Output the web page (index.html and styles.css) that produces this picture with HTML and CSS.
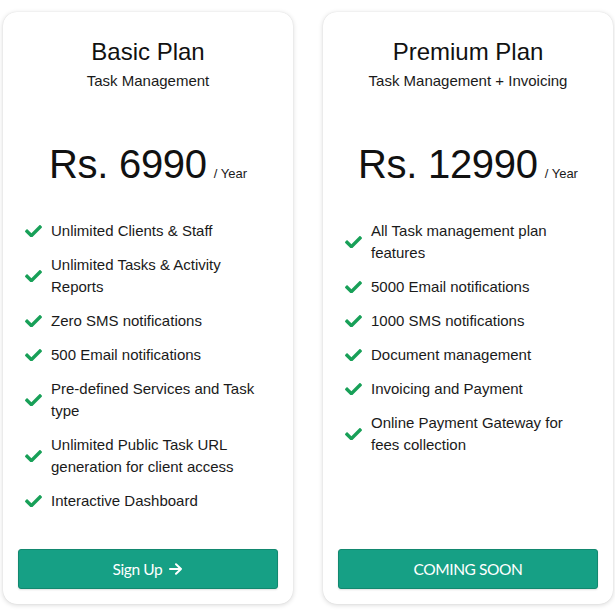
FILE: index.html
```html
<!DOCTYPE html>
<html lang="en">
<head>
<meta charset="utf-8">
<title>Plans</title>
<link rel="stylesheet" href="styles.css">
</head>
<body>
<div class="plans">
  <div class="card">
    <h2 class="plan-name">Basic Plan</h2>
    <p class="plan-sub">Task Management</p>
    <div class="price"><span class="amount">Rs. 6990</span><span class="per">/ Year</span></div>
    <ul class="features">
      <li><svg class="check" viewBox="0 64 512 384"><path d="M173.898 439.404l-166.4-166.4c-9.997-9.997-9.997-26.206 0-36.204l36.203-36.204c9.997-9.998 26.207-9.998 36.204 0L192 312.69 432.095 72.596c9.997-9.997 26.207-9.997 36.204 0l36.203 36.204c9.997 9.997 9.997 26.206 0 36.204l-294.4 294.401c-9.998 9.997-26.207 9.997-36.204-.001z"/></svg><span>Unlimited Clients &amp; Staff</span></li>
      <li><svg class="check" viewBox="0 64 512 384"><path d="M173.898 439.404l-166.4-166.4c-9.997-9.997-9.997-26.206 0-36.204l36.203-36.204c9.997-9.998 26.207-9.998 36.204 0L192 312.69 432.095 72.596c9.997-9.997 26.207-9.997 36.204 0l36.203 36.204c9.997 9.997 9.997 26.206 0 36.204l-294.4 294.401c-9.998 9.997-26.207 9.997-36.204-.001z"/></svg><span>Unlimited Tasks &amp; Activity Reports</span></li>
      <li><svg class="check" viewBox="0 64 512 384"><path d="M173.898 439.404l-166.4-166.4c-9.997-9.997-9.997-26.206 0-36.204l36.203-36.204c9.997-9.998 26.207-9.998 36.204 0L192 312.69 432.095 72.596c9.997-9.997 26.207-9.997 36.204 0l36.203 36.204c9.997 9.997 9.997 26.206 0 36.204l-294.4 294.401c-9.998 9.997-26.207 9.997-36.204-.001z"/></svg><span>Zero SMS notifications</span></li>
      <li><svg class="check" viewBox="0 64 512 384"><path d="M173.898 439.404l-166.4-166.4c-9.997-9.997-9.997-26.206 0-36.204l36.203-36.204c9.997-9.998 26.207-9.998 36.204 0L192 312.69 432.095 72.596c9.997-9.997 26.207-9.997 36.204 0l36.203 36.204c9.997 9.997 9.997 26.206 0 36.204l-294.4 294.401c-9.998 9.997-26.207 9.997-36.204-.001z"/></svg><span>500 Email notifications</span></li>
      <li><svg class="check" viewBox="0 64 512 384"><path d="M173.898 439.404l-166.4-166.4c-9.997-9.997-9.997-26.206 0-36.204l36.203-36.204c9.997-9.998 26.207-9.998 36.204 0L192 312.69 432.095 72.596c9.997-9.997 26.207-9.997 36.204 0l36.203 36.204c9.997 9.997 9.997 26.206 0 36.204l-294.4 294.401c-9.998 9.997-26.207 9.997-36.204-.001z"/></svg><span>Pre-defined Services and Task type</span></li>
      <li><svg class="check" viewBox="0 64 512 384"><path d="M173.898 439.404l-166.4-166.4c-9.997-9.997-9.997-26.206 0-36.204l36.203-36.204c9.997-9.998 26.207-9.998 36.204 0L192 312.69 432.095 72.596c9.997-9.997 26.207-9.997 36.204 0l36.203 36.204c9.997 9.997 9.997 26.206 0 36.204l-294.4 294.401c-9.998 9.997-26.207 9.997-36.204-.001z"/></svg><span>Unlimited Public Task URL generation for client access</span></li>
      <li><svg class="check" viewBox="0 64 512 384"><path d="M173.898 439.404l-166.4-166.4c-9.997-9.997-9.997-26.206 0-36.204l36.203-36.204c9.997-9.998 26.207-9.998 36.204 0L192 312.69 432.095 72.596c9.997-9.997 26.207-9.997 36.204 0l36.203 36.204c9.997 9.997 9.997 26.206 0 36.204l-294.4 294.401c-9.998 9.997-26.207 9.997-36.204-.001z"/></svg><span>Interactive Dashboard</span></li>
    </ul>
    <button class="btn">Sign Up <svg class="arrow" viewBox="0 0 14 12"><path d="M1 6h11M7 1.2L12 6l-5 4.8"/></svg></button>
  </div>
  <div class="card">
    <h2 class="plan-name">Premium Plan</h2>
    <p class="plan-sub">Task Management + Invoicing</p>
    <div class="price"><span class="amount">Rs. 12990</span><span class="per">/ Year</span></div>
    <ul class="features">
      <li><svg class="check" viewBox="0 64 512 384"><path d="M173.898 439.404l-166.4-166.4c-9.997-9.997-9.997-26.206 0-36.204l36.203-36.204c9.997-9.998 26.207-9.998 36.204 0L192 312.69 432.095 72.596c9.997-9.997 26.207-9.997 36.204 0l36.203 36.204c9.997 9.997 9.997 26.206 0 36.204l-294.4 294.401c-9.998 9.997-26.207 9.997-36.204-.001z"/></svg><span>All Task management plan features</span></li>
      <li><svg class="check" viewBox="0 64 512 384"><path d="M173.898 439.404l-166.4-166.4c-9.997-9.997-9.997-26.206 0-36.204l36.203-36.204c9.997-9.998 26.207-9.998 36.204 0L192 312.69 432.095 72.596c9.997-9.997 26.207-9.997 36.204 0l36.203 36.204c9.997 9.997 9.997 26.206 0 36.204l-294.4 294.401c-9.998 9.997-26.207 9.997-36.204-.001z"/></svg><span>5000 Email notifications</span></li>
      <li><svg class="check" viewBox="0 64 512 384"><path d="M173.898 439.404l-166.4-166.4c-9.997-9.997-9.997-26.206 0-36.204l36.203-36.204c9.997-9.998 26.207-9.998 36.204 0L192 312.69 432.095 72.596c9.997-9.997 26.207-9.997 36.204 0l36.203 36.204c9.997 9.997 9.997 26.206 0 36.204l-294.4 294.401c-9.998 9.997-26.207 9.997-36.204-.001z"/></svg><span>1000 SMS notifications</span></li>
      <li><svg class="check" viewBox="0 64 512 384"><path d="M173.898 439.404l-166.4-166.4c-9.997-9.997-9.997-26.206 0-36.204l36.203-36.204c9.997-9.998 26.207-9.998 36.204 0L192 312.69 432.095 72.596c9.997-9.997 26.207-9.997 36.204 0l36.203 36.204c9.997 9.997 9.997 26.206 0 36.204l-294.4 294.401c-9.998 9.997-26.207 9.997-36.204-.001z"/></svg><span>Document management</span></li>
      <li><svg class="check" viewBox="0 64 512 384"><path d="M173.898 439.404l-166.4-166.4c-9.997-9.997-9.997-26.206 0-36.204l36.203-36.204c9.997-9.998 26.207-9.998 36.204 0L192 312.69 432.095 72.596c9.997-9.997 26.207-9.997 36.204 0l36.203 36.204c9.997 9.997 9.997 26.206 0 36.204l-294.4 294.401c-9.998 9.997-26.207 9.997-36.204-.001z"/></svg><span>Invoicing and Payment</span></li>
      <li><svg class="check" viewBox="0 64 512 384"><path d="M173.898 439.404l-166.4-166.4c-9.997-9.997-9.997-26.206 0-36.204l36.203-36.204c9.997-9.998 26.207-9.998 36.204 0L192 312.69 432.095 72.596c9.997-9.997 26.207-9.997 36.204 0l36.203 36.204c9.997 9.997 9.997 26.206 0 36.204l-294.4 294.401c-9.998 9.997-26.207 9.997-36.204-.001z"/></svg><span>Online Payment Gateway for fees collection</span></li>
    </ul>
    <button class="btn">COMING SOON</button>
  </div>
</div>
</body>
</html>
```
FILE: styles.css
```css
* { box-sizing: border-box; }
html, body { margin: 0; padding: 0; background: #fff; }
body {
  font-family: "Liberation Sans", Arial, sans-serif;
  color: #1a1a1a;
}
.plans {
  display: flex;
  gap: 30px;
  padding: 12px 2px 12px 3px;
}
.card {
  width: 290px;
  background: #fff;
  border-radius: 14px;
  box-shadow: 0 1px 5px rgba(0, 0, 0, 0.16), 0 0 1px rgba(0, 0, 0, 0.12);
  padding: 26px 15px 15px;
  display: flex;
  flex-direction: column;
}
.plan-name {
  margin: 0;
  font-size: 24px;
  font-weight: normal;
  line-height: 28px;
  text-align: center;
  color: #111;
}
.plan-sub {
  margin: 5px 0 0;
  font-size: 15px;
  line-height: 20px;
  text-align: center;
}
.price {
  margin-top: 49px;
  text-align: center;
  line-height: 48px;
}
.amount {
  font-size: 40px;
  letter-spacing: -0.3px;
  color: #111;
}
.per {
  font-size: 13px;
  margin-left: 7px;
}
.features {
  list-style: none;
  margin: 22px 0 37px;
  padding: 0 10px 0 7px;
  display: flex;
  flex-direction: column;
  gap: 12px;
}
.features li {
  display: flex;
  align-items: center;
  gap: 9px;
  font-size: 15px;
  line-height: 22px;
}
.check {
  flex: none;
  width: 17px;
  height: 12.75px;
  fill: #18a058;
}
.btn {
  margin-top: auto;
  height: 40px;
  width: 100%;
  background: #16a085;
  border: 1px solid #12886f;
  border-radius: 3px;
  color: #fff;
  font-family: Lato, "Liberation Sans", sans-serif;
  font-size: 15.5px;
  letter-spacing: -0.4px;
  display: flex;
  align-items: center;
  justify-content: center;
  gap: 7px;
  box-shadow: 0 1px 2px rgba(0, 0, 0, 0.12);
}
.arrow {
  width: 14px;
  height: 12px;
  fill: none;
  stroke: #fff;
  stroke-width: 2;
  stroke-linecap: round;
  stroke-linejoin: round;
}
```
